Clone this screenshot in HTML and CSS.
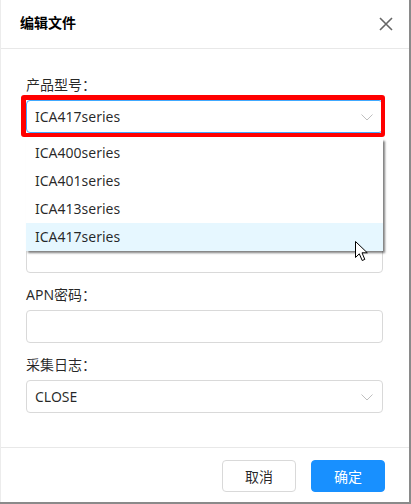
FILE: index.html
```html
<!DOCTYPE html>
<html lang="zh">
<head>
<meta charset="utf-8">
<title>编辑文件</title>
<link rel="stylesheet" href="styles.css">
</head>
<body>
<div class="modal">
  <div class="modal-header">
    <div class="modal-title">编辑文件</div>
    <svg class="close" width="14" height="14" viewBox="0 0 14 14"><path d="M1 1 L13 13 M13 1 L1 13" stroke="#666" stroke-width="1.6" fill="none"/></svg>
  </div>
  <div class="modal-body">
    <div class="field">
      <div class="label">产品型号：</div>
      <div class="select focused">
        <span class="value">ICA417series</span>
        <svg class="chev" width="12" height="7" viewBox="0 0 12 7"><polyline points="0.5,0.5 6,6 11.5,0.5" stroke="#bfbfbf" stroke-width="1" fill="none"/></svg>
        <div class="mark"></div>
        <ul class="dropdown">
          <li class="opt">ICA400series</li>
          <li class="opt">ICA401series</li>
          <li class="opt">ICA413series</li>
          <li class="opt active">ICA417series</li>
        </ul>
      </div>
    </div>
    <div class="field">
      <div class="label covered">APN：</div>
      <div class="input"></div>
    </div>
    <div class="field">
      <div class="label covered">APN用户名：</div>
      <div class="input"></div>
    </div>
    <div class="field">
      <div class="label">APN密码：</div>
      <div class="input"></div>
    </div>
    <div class="field">
      <div class="label">采集日志：</div>
      <div class="select">
        <span class="value">CLOSE</span>
        <svg class="chev" width="12" height="7" viewBox="0 0 12 7"><polyline points="0.5,0.5 6,6 11.5,0.5" stroke="#bfbfbf" stroke-width="1" fill="none"/></svg>
      </div>
    </div>
  </div>
  <div class="modal-footer">
    <button class="btn">取消</button>
    <button class="btn primary">确定</button>
  </div>
  <svg class="cursor" width="14" height="21" viewBox="0 0 14 21"><path d="M0.5 0.5 L0.5 16.5 L4.3 12.8 L7.2 19.5 L9.8 18.4 L7 11.8 L12.3 11.8 Z" fill="#fff" stroke="#000" stroke-width="1" stroke-linejoin="miter"/></svg>
</div>
</body>
</html>
```

FILE: styles.css
```css
* { box-sizing: border-box; }
html, body { margin: 0; padding: 0; }
body {
  width: 411px;
  height: 504px;
  background: #8a8a8a;
  font-family: "Noto Sans", "Noto Sans CJK SC", sans-serif;
  font-size: 14px;
  color: rgba(0, 0, 0, 0.85);
  overflow: hidden;
}
.modal {
  position: relative;
  width: 409px;
  height: 502px;
  background: #fff;
  border-left: 1px solid #ececec;
  display: flex;
  flex-direction: column;
}
.modal-header {
  height: 49px;
  border-bottom: 1px solid #e8e8e8;
  display: flex;
  align-items: center;
  justify-content: space-between;
  padding: 0 16px 0 19px;
}
.modal-title {
  font-weight: 700;
  font-size: 14px;
  color: #000;
  line-height: 22px;
  margin-top: -2px;
}
.close { display: block; margin-top: -1px; }
.modal-body {
  flex: 1;
  padding: 25px 26px 0 25px;
}
.field { margin-bottom: 11px; }
.label {
  height: 22px;
  line-height: 22px;
  margin-bottom: 4px;
  color: rgba(0, 0, 0, 0.85);
}
.label.covered { visibility: hidden; }
.input, .select {
  position: relative;
  height: 33px;
  border: 1px solid #d9d9d9;
  border-radius: 4px;
  background: #fff;
}
.select {
  display: flex;
  align-items: center;
  justify-content: space-between;
  padding: 0 9px 0 8px;
}
.select.focused { border-color: #40a9ff; }
.value { line-height: 22px; color: rgba(0, 0, 0, 0.85); }
.chev { display: block; margin-top: 1px; }
.mark {
  position: absolute;
  top: -6px;
  left: -6px;
  right: -3px;
  bottom: -5px;
  border: 4px solid #ff0000;
  border-left-width: 5px;
  border-top-width: 5px;
  border-radius: 3px;
  pointer-events: none;
}
.dropdown {
  position: absolute;
  top: 38px;
  left: -1px;
  right: -1px;
  margin: 0;
  padding: 0;
  list-style: none;
  background: #fff;
  box-shadow: 2px 2px 2px rgba(0, 0, 0, 0.5);
  z-index: 5;
}
.opt {
  height: 28px;
  line-height: 28px;
  padding-left: 9px;
  color: rgba(0, 0, 0, 0.85);
}
.opt.active { background: #e6f7ff; }
.modal-footer {
  border-top: 1px solid #e8e8e8;
  padding: 12px 24px 10px 0;
  display: flex;
  justify-content: flex-end;
  gap: 15px;
}
.btn {
  width: 74px;
  height: 32px;
  border: 1px solid #d9d9d9;
  border-radius: 4px;
  background: #fff;
  font-family: "Noto Sans", "Noto Sans CJK SC", sans-serif;
  font-size: 14px;
  color: rgba(0, 0, 0, 0.85);
  padding: 0;
}
.btn.primary {
  background: #1890ff;
  border-color: #1890ff;
  color: #fff;
}
.cursor {
  position: absolute;
  left: 354px;
  top: 241px;
  z-index: 10;
}
```
